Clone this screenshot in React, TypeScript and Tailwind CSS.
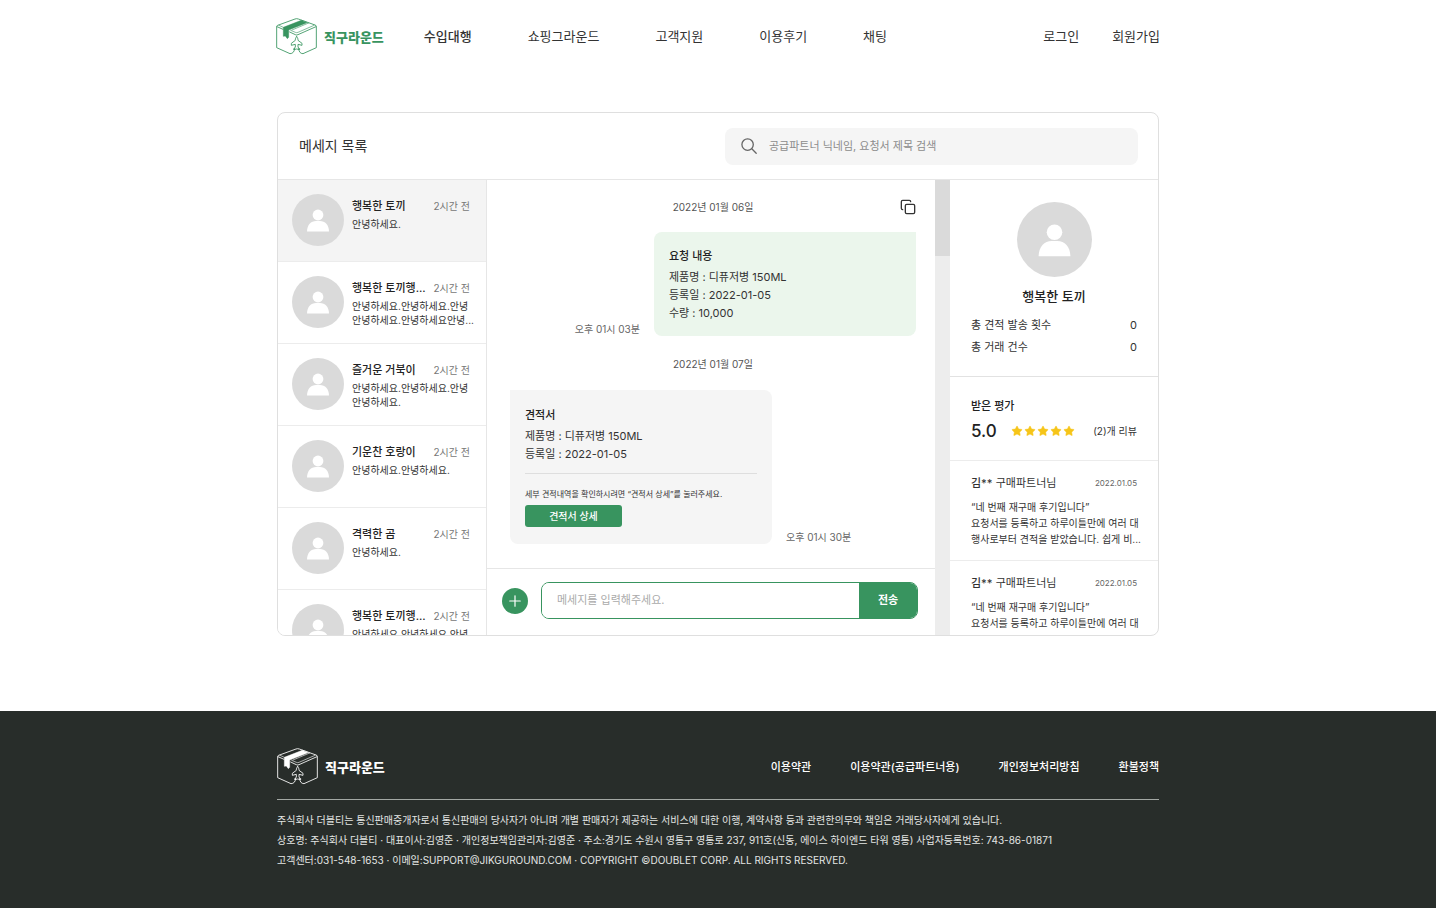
import { Copy, Plus, Star } from "lucide-react";

type Thread = {
  name: string;
  time: string;
  lines: string[];
  active?: boolean;
};

const NAV_ITEMS = ["수입대행", "쇼핑그라운드", "고객지원", "이용후기", "채팅"];

const THREADS: Thread[] = [
  { name: "행복한 토끼", time: "2시간 전", lines: ["안녕하세요."], active: true },
  {
    name: "행복한 토끼행...",
    time: "2시간 전",
    lines: ["안녕하세요.안녕하세요.안녕", "안녕하세요.안녕하세요안녕..."],
  },
  {
    name: "즐거운 거북이",
    time: "2시간 전",
    lines: ["안녕하세요.안녕하세요.안녕", "안녕하세요."],
  },
  { name: "기운찬 호랑이", time: "2시간 전", lines: ["안녕하세요.안녕하세요."] },
  { name: "격력한 곰", time: "2시간 전", lines: ["안녕하세요."] },
  {
    name: "행복한 토끼행...",
    time: "2시간 전",
    lines: ["안녕하세요.안녕하세요.안녕"],
  },
];

const REVIEWS = [
  {
    id: 1,
    lines: [
      "“네 번째 재구매 후기입니다”",
      "요청서를 등록하고 하루이틀만에 여러 대",
      "행사로부터 견적을 받았습니다. 쉽게 비...",
    ],
  },
  {
    id: 2,
    lines: ["“네 번째 재구매 후기입니다”", "요청서를 등록하고 하루이틀만에 여러 대"],
  },
];

const FOOTER_LINKS = [
  "이용약관",
  "이용약관(공급파트너용)",
  "개인정보처리방침",
  "환불정책",
];

// Box with a strip of tape and a plane taking off from the front edge.
function Logo({ className }: { className: string }) {
  return (
    <a href="#" className={`flex items-center gap-[7px] ${className}`}>
      <svg
        viewBox="0 0 123 111"
        className="h-[37px] w-[41px]"
        fill="none"
        stroke="currentColor"
        strokeWidth="2.6"
        strokeLinejoin="round"
        strokeLinecap="round"
        aria-hidden="true"
      >
        <path d="M56 91C56 101 50 107 42 107L2 89V26Q2 23 5 22L57 3Q62 1 67 3L117 21Q121 22 121 26V89L81 107C73 107 68 101 68 91" />
        <path d="M3 26L21 34M41 42L58 50Q62 52 66 50L120 26" />
        <path d="M9 22L22 28M44 37L58 43Q62 45 66 43L114 22" strokeWidth="1.8" />
        <path d="M98 15L48 36" strokeWidth="1.8" />
        <path
          d="M76 7L22 28V55L28 54L34 62L38 58V36L93 14Z"
          fill="currentColor"
          strokeWidth="1.4"
        />
        <path
          d="M62 56C59 59 58 62 58 67L46 76V82L58 79V88L53 92V95L62 93L71 95V92L66 88V79L78 82V76L66 67C66 62 65 59 62 56Z"
          strokeWidth="2.6"
        />
      </svg>
      <span className="text-[13px] leading-5 font-black">직구라운드</span>
    </a>
  );
}

function Avatar({ className }: { className: string }) {
  return (
    <svg
      viewBox="0 0 52 52"
      className={`shrink-0 rounded-full bg-[#dadada] ${className}`}
      fill="#ffffff"
      aria-hidden="true"
    >
      <circle cx="26" cy="21" r="5.4" />
      <path d="M15 37.6C15 31 19 27 24 27H28C33 27 37 31 37 37.6Z" />
    </svg>
  );
}

function ThreadRow({ thread }: { thread: Thread }) {
  return (
    <li
      className={`flex h-[82px] shrink-0 gap-2 overflow-hidden border-b border-[#ececec] pt-3.5 pr-4 pl-3.5 ${
        thread.active ? "bg-[#f4f4f4]" : "bg-white"
      }`}
    >
      <Avatar className="size-[52px]" />
      <div className="min-w-0 flex-1 pt-1 whitespace-nowrap">
        <div className="flex justify-between">
          <strong className="text-[11px] leading-4 font-medium text-[#222]">
            {thread.name}
          </strong>
          <span className="text-[10px] leading-4 text-[#777]">{thread.time}</span>
        </div>
        <div className="pt-[3px] text-[10px] leading-[14px] text-[#333]">
          {thread.lines.map((line) => (
            <p key={line}>{line}</p>
          ))}
        </div>
      </div>
    </li>
  );
}

function Conversation() {
  return (
    <section
      aria-label="대화"
      className="flex min-w-0 flex-1 flex-col border-l border-[#e6e6e6]"
    >
      <div className="flex-1 overflow-hidden pt-[17px] pr-[19px] pl-[23px] text-[#333]">
        <div className="grid h-5 grid-cols-[1fr_auto_1fr] items-center text-[10px] text-[#555]">
          <time className="col-start-2">2022년 01월 06일</time>
          <button type="button" aria-label="복사" className="justify-self-end">
            <Copy size={16} strokeWidth={2} className="text-[#333]" />
          </button>
        </div>

        <div className="mt-[15px] flex items-end justify-end gap-3.5">
          <time className="text-[10px] leading-[14px] text-[#666]">오후 01시 03분</time>
          <div className="w-[262px] rounded-lg rounded-tr-none bg-[#ebf6ec] px-[15px] pt-[15px] pb-3.5 text-[11px] leading-[18px]">
            <strong className="block pb-[3px] font-medium text-[#222]">
              요청 내용
            </strong>
            <p>제품명 : 디퓨저병 150ML</p>
            <p>등록일 : 2022-01-05</p>
            <p>수량 : 10,000</p>
          </div>
        </div>

        <div className="mt-[18px] flex h-5 items-center justify-center text-[10px] text-[#555]">
          <time>2022년 01월 07일</time>
        </div>

        <div className="mt-4 flex items-end gap-3.5">
          <div className="w-[262px] rounded-lg rounded-tl-none bg-[#f5f5f5] px-[15px] pt-4 pb-[17px] text-[11px] leading-[18px]">
            <strong className="block pb-[3px] font-medium text-[#222]">견적서</strong>
            <p>제품명 : 디퓨저병 150ML</p>
            <p>등록일 : 2022-01-05</p>
            <hr className="mt-2.5 border-[#dedede]" />
            <p className="mt-3 text-[8px] leading-4">
              세부 견적내역을 확인하시려면 “견적서 상세”를 눌러주세요.
            </p>
            <button
              type="button"
              className="mt-[3px] block h-[22px] w-[97px] rounded-[3px] bg-[#38945f] text-[10px] leading-[22px] font-medium text-white"
            >
              견적서 상세
            </button>
          </div>
          <time className="text-[10px] leading-[14px] text-[#666]">오후 01시 30분</time>
        </div>
      </div>

      <form className="flex h-[67px] shrink-0 items-center gap-[13px] border-t border-[#e6e6e6] pr-[17px] pb-[3px] pl-[15px]">
        <button
          type="button"
          aria-label="파일 추가"
          className="flex size-[26px] shrink-0 items-center justify-center rounded-full bg-[#38945f] text-white"
        >
          <Plus size={18} strokeWidth={1.6} />
        </button>
        <div className="flex h-[37px] min-w-0 flex-1 overflow-hidden rounded-lg border border-[#38945f]">
          <input
            type="text"
            aria-label="메세지"
            placeholder="메세지를 입력해주세요."
            className="min-w-0 flex-1 bg-white px-[15px] text-[11px] text-[#333] outline-none placeholder:text-[#aaa]"
          />
          <button
            type="submit"
            className="w-[58px] bg-[#38945f] text-[11px] font-bold text-white"
          >
            전송
          </button>
        </div>
      </form>
    </section>
  );
}

function PartnerPanel() {
  return (
    <aside className="w-[208px] shrink-0 overflow-hidden text-[#333]">
      <div className="border-b border-[#e2e2e2] px-[21px] pt-[22px] pb-[18px]">
        <Avatar className="mx-auto size-[75px]" />
        <h2 className="mt-[9px] text-center text-[13px] leading-5 font-medium text-[#222]">
          행복한 토끼
        </h2>
        <dl className="mt-2 text-[11px] leading-[22px]">
          <div className="flex justify-between">
            <dt>총 견적 발송 횟수</dt>
            <dd>0</dd>
          </div>
          <div className="flex justify-between">
            <dt>총 거래 건수</dt>
            <dd>0</dd>
          </div>
        </dl>
      </div>

      <div className="border-b border-[#ececec] px-[21px] pt-5 pb-[17px]">
        <h3 className="text-[11px] leading-[18px] font-medium text-[#222]">받은 평가</h3>
        <div className="mt-1 flex items-center">
          <span className="text-[17px] leading-6 font-medium text-[#222]">5.0</span>
          <span
            className="ml-3.5 flex gap-px text-[#f6c519]"
            role="img"
            aria-label="별점 5점"
          >
            {[1, 2, 3, 4, 5].map((n) => (
              <Star key={n} size={12} fill="currentColor" strokeWidth={1} />
            ))}
          </span>
          <span className="ml-auto text-[10px] leading-4">(2)개 리뷰</span>
        </div>
      </div>

      {REVIEWS.map((review) => (
        <article
          key={review.id}
          className="border-b border-[#ececec] px-[21px] pt-3.5 pb-[13px] whitespace-nowrap last:border-b-0"
        >
          <div className="flex items-center justify-between">
            <h4 className="text-[11px] leading-4">
              <b className="font-medium">김**</b> 구매파트너님
            </h4>
            <time className="text-[8px] leading-4 text-[#666]">2022.01.05</time>
          </div>
          <div className="mt-2 text-[10px] leading-[16px]">
            {review.lines.map((line) => (
              <p key={line}>{line}</p>
            ))}
          </div>
        </article>
      ))}
    </aside>
  );
}

export default function App() {
  return (
    <div
      lang="ko"
      className="flex min-h-screen flex-col bg-white font-['Inter','Noto_Sans_CJK_KR',sans-serif] text-[#333]"
    >
      <header className="mx-auto flex h-[73px] w-full max-w-[884px] items-center text-[13px] leading-5">
        <Logo className="text-[#38945f]" />
        <nav aria-label="주 메뉴" className="ml-10 flex gap-14 pb-0.5">
          {NAV_ITEMS.map((item, i) => (
            <a key={item} href="#" className={i === 0 ? "font-medium" : ""}>
              {item}
            </a>
          ))}
        </nav>
        <div className="ml-auto flex gap-[33px] pb-0.5">
          <a href="#">로그인</a>
          <a href="#">회원가입</a>
        </div>
      </header>

      <main className="mx-auto mt-[39px] mb-[75px] flex h-[524px] w-full max-w-[882px] flex-col overflow-hidden rounded-lg border border-[#dfdfdf]">
        <div className="flex h-[67px] shrink-0 items-center justify-between border-b border-[#e6e6e6] pr-5 pl-[21px]">
          <h1 className="text-[14px] leading-5">메세지 목록</h1>
          <label className="flex h-[37px] w-[413px] items-center gap-3 rounded-lg bg-[#f5f5f5] px-4">
            <svg
              viewBox="0 0 16 16"
              className="size-4 shrink-0"
              fill="none"
              stroke="#666666"
              strokeWidth="1.3"
              strokeLinecap="round"
              aria-hidden="true"
            >
              <circle cx="6.6" cy="6.6" r="5.7" />
              <path d="M10.8 10.8L15.2 15.2" />
            </svg>
            <input
              type="search"
              aria-label="메세지 검색"
              placeholder="공급파트너 닉네임, 요청서 제목 검색"
              className="min-w-0 flex-1 bg-transparent text-[11px] outline-none placeholder:text-[#8c8c8c]"
            />
          </label>
        </div>

        <div className="flex min-h-0 flex-1">
          <ul className="flex w-[208px] shrink-0 flex-col overflow-hidden">
            {THREADS.map((thread, i) => (
              <ThreadRow key={i} thread={thread} />
            ))}
          </ul>
          <Conversation />
          <div aria-hidden="true" className="w-[15px] shrink-0 bg-[#ededed]">
            <div className="h-[76px] bg-[#dadada]" />
          </div>
          <PartnerPanel />
        </div>
      </main>

      <footer className="flex-1 bg-[#282d2a] pt-[37px] pb-9 text-white">
        <div className="mx-auto w-full max-w-[882px]">
          <div className="flex items-center justify-between">
            <Logo className="text-white" />
            <nav
              aria-label="약관"
              className="flex gap-[39px] text-[11px] leading-5 font-medium"
            >
              {FOOTER_LINKS.map((item) => (
                <a key={item} href="#">
                  {item}
                </a>
              ))}
            </nav>
          </div>
          <hr className="mt-3.5 border-[#a3a8a4]" />
          <div className="mt-2.5 text-[10px] leading-5 text-[#e4e6e4]">
            <p>
              주식회사 더블티는 통신판매중개자로서 통신판매의 당사자가 아니며 개별 판매자가
              제공하는 서비스에 대한 이행, 계약사항 등과 관련한의무와 책임은 거래당사자에게
              있습니다.
            </p>
            <p>
              상호명: 주식회사 더블티 · 대표이사:김영준 · 개인정보책임관리자:김영준 ·
              주소:경기도 수원시 영통구 영통로 237, 911호(신동, 에이스 하이엔드 타워 영통)
              사업자등록번호: 743-86-01871
            </p>
            <p>
              고객센터:031-548-1653 · 이메일:SUPPORT@JIKGUROUND.COM · COPYRIGHT ©DOUBLET
              CORP. ALL RIGHTS RESERVED.
            </p>
          </div>
        </div>
      </footer>
    </div>
  );
}
